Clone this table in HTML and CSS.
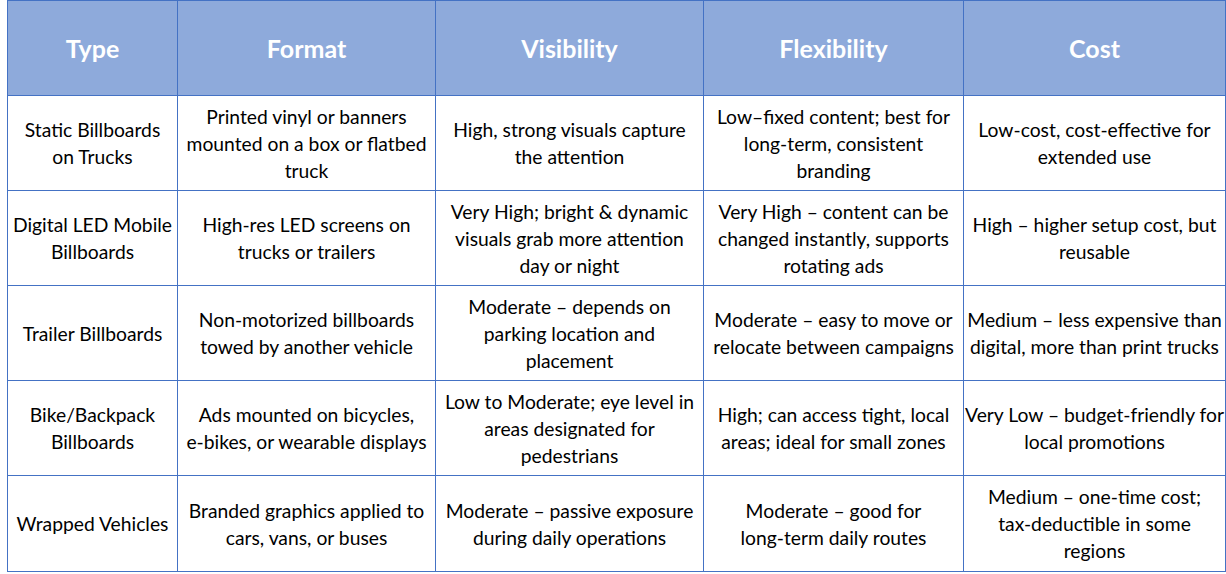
FILE: index.html
```html
<!DOCTYPE html>
<html>
<head>
<meta charset="utf-8">
<link rel="stylesheet" href="styles.css">
</head>
<body>
<table class="grid">
  <colgroup>
    <col class="c1"><col class="c2"><col class="c3"><col class="c4"><col class="c5">
  </colgroup>
  <thead>
    <tr class="head">
      <th>Type</th><th>Format</th><th>Visibility</th><th>Flexibility</th><th>Cost</th>
    </tr>
  </thead>
  <tbody>
    <tr>
      <td>Static Billboards<br>on Trucks</td>
      <td>Printed vinyl or banners<br>mounted on a box or flatbed<br>truck</td>
      <td>High, strong visuals capture<br>the attention</td>
      <td>Low–fixed content; best for<br>long-term, consistent<br>branding</td>
      <td>Low-cost, cost-effective for<br>extended use</td>
    </tr>
    <tr>
      <td>Digital LED Mobile<br>Billboards</td>
      <td>High-res LED screens on<br>trucks or trailers</td>
      <td>Very High; bright &amp; dynamic<br>visuals grab more attention<br>day or night</td>
      <td>Very High – content can be<br>changed instantly, supports<br>rotating ads</td>
      <td>High – higher setup cost, but<br>reusable</td>
    </tr>
    <tr>
      <td>Trailer Billboards</td>
      <td>Non-motorized billboards<br>towed by another vehicle</td>
      <td>Moderate – depends on<br>parking location and<br>placement</td>
      <td>Moderate – easy to move or<br>relocate between campaigns</td>
      <td>Medium – less expensive than<br>digital, more than print trucks</td>
    </tr>
    <tr>
      <td>Bike/Backpack<br>Billboards</td>
      <td>Ads mounted on bicycles,<br>e-bikes, or wearable displays</td>
      <td>Low to Moderate; eye level in<br>areas designated for<br>pedestrians</td>
      <td>High; can access tight, local<br>areas; ideal for small zones</td>
      <td>Very Low – budget-friendly for<br>local promotions</td>
    </tr>
    <tr class="last">
      <td>Wrapped Vehicles</td>
      <td>Branded graphics applied to<br>cars, vans, or buses</td>
      <td>Moderate – passive exposure<br>during daily operations</td>
      <td>Moderate – good for<br>long-term daily routes</td>
      <td>Medium – one-time cost;<br>tax-deductible in some<br>regions</td>
    </tr>
  </tbody>
</table>
</body>
</html>
```
FILE: styles.css
```css
html, body {
  margin: 0;
  padding: 0;
  background: #ffffff;
}
body {
  padding-left: 7px;
  font-family: "Lato", "Open Sans", sans-serif;
}
.grid {
  border-collapse: collapse;
  table-layout: fixed;
  width: 1218px;
  color: #000000;
}
.c1 { width: 170px; }
.c2 { width: 258px; }
.c3 { width: 268px; }
.c4 { width: 260px; }
.c5 { width: 262px; }
.grid th, .grid td {
  border: 1px solid #4472c4;
  text-align: center;
  vertical-align: middle;
  padding: 0;
  white-space: nowrap;
}
.head th {
  height: 94px;
  background: #8eaadb;
  color: #ffffff;
  font-weight: 700;
  font-size: 25px;
}
.grid td {
  height: 94px;
  font-size: 19.3px;
  line-height: 27px;
}
.grid tr.last td {
  height: 95px;
}
```
